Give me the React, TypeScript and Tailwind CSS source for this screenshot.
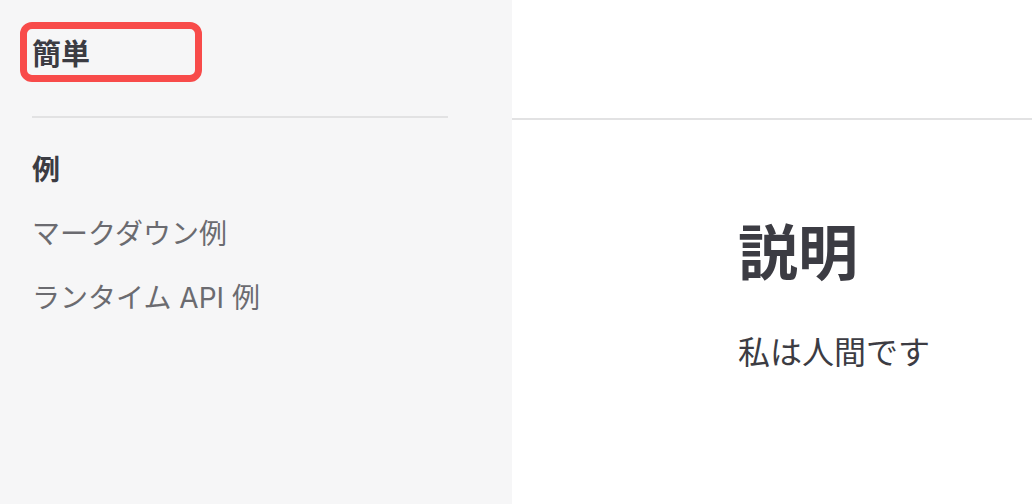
const items = [
  { label: '例', active: true },
  { label: 'マークダウン例', active: false },
  { label: 'ランタイム API 例', active: false },
]

const font = "font-['Inter','Noto_Sans_CJK_JP',sans-serif]"

export default function App() {
  return (
    <div className={`flex h-[504px] w-[1032px] overflow-hidden bg-white ${font}`}>
      <aside className="w-[512px] shrink-0 bg-[#f6f6f7] pl-8 pr-16">
        <div className="relative flex h-[118px] items-center border-b-2 border-[#e2e2e3]">
          <span className="pb-2 text-[29px] font-semibold leading-none text-[#3c3c43]">簡単</span>
          <div className="absolute left-[-12px] top-[22px] h-[60px] w-[182px] rounded-[12px] border-[7px] border-[#f84b4a]" />
        </div>
        <nav className="flex flex-col pt-[20px]">
          {items.map((item) => (
            <a
              key={item.label}
              className={`flex h-[64px] items-center text-[28px] leading-none ${
                item.active ? 'font-bold text-[#3c3c43]' : 'text-[#6b6b70]'
              }`}
            >
              {item.label}
            </a>
          ))}
        </nav>
      </aside>

      <div className="flex min-w-0 flex-1 flex-col">
        <header className="h-[120px] shrink-0 border-b-2 border-[#e2e2e3]" />
        <main className="pl-[226px] pt-[103px] text-[#3c3c43]">
          <h1 className="text-[60px] font-bold leading-none">説明</h1>
          <p className="mt-[54px] text-[32px] leading-none">私は人間です</p>
        </main>
      </div>
    </div>
  )
}
